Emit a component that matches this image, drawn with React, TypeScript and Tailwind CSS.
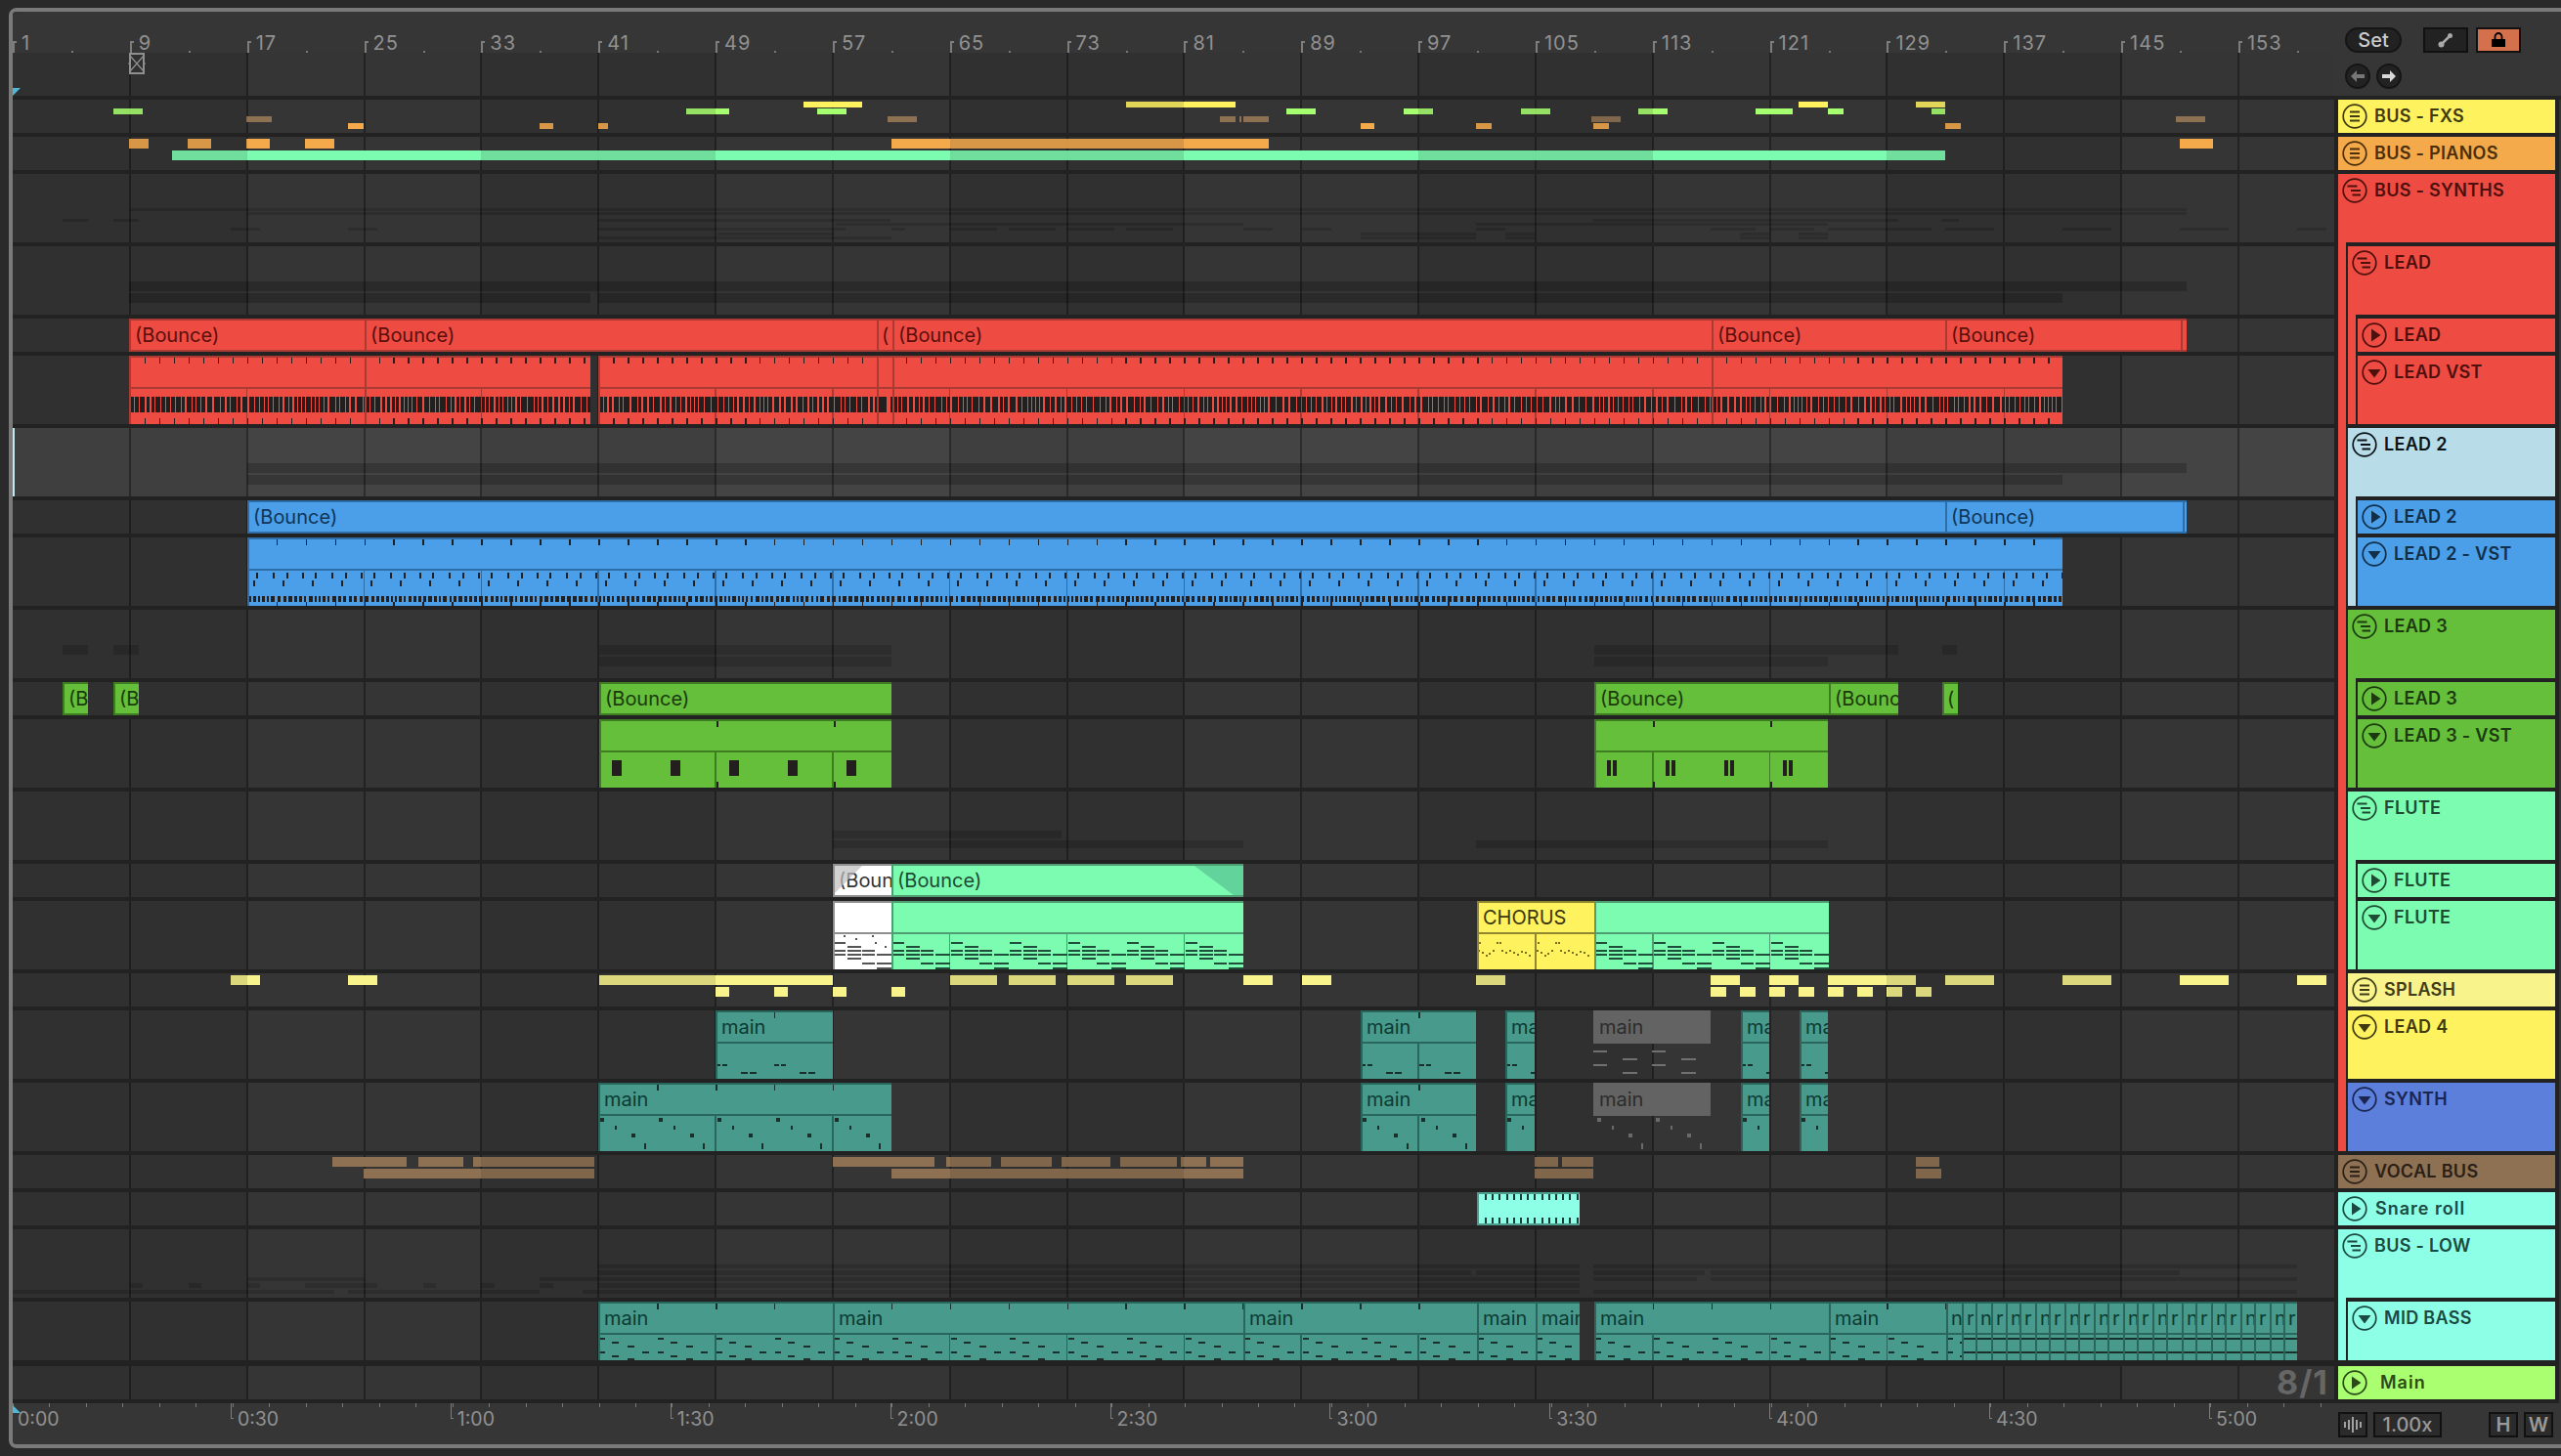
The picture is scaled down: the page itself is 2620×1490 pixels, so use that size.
import React from "react";

const X0 = 13;
const BAR = 14.98;
const GRID = Array.from({ length: 19 }, (_, i) => X0 + 8 * BAR * (i + 1));
const PERIOD = 16 * BAR;

type Rect = [number, number, number, number];
type Pal = { bg: string; bd: string; lh: string; tx: string; line: string };

const RED: Pal = { bg: "bg-[#ee4b43]", bd: "border-[#a93a34]", lh: "bg-[#a93a34]", tx: "text-[#5a0f0b]", line: "#a93a34" };
const BLUE: Pal = { bg: "bg-[#4a9fe8]", bd: "border-[#2f6da6]", lh: "bg-[#2f6da6]", tx: "text-[#103558]", line: "#2f6da6" };
const GREEN: Pal = { bg: "bg-[#65bf3a]", bd: "border-[#3f7d22]", lh: "bg-[#3f7d22]", tx: "text-[#1a3a0c]", line: "#3f7d22" };
const MINT: Pal = { bg: "bg-[#7cfcb0]", bd: "border-[#4f9d72]", lh: "bg-[#4f9d72]", tx: "text-[#1c4a33]", line: "#4f9d72" };
const WHITE: Pal = { bg: "bg-white", bd: "border-[#8f8f8f]", lh: "bg-[#8f8f8f]", tx: "text-[#333333]", line: "#8f8f8f" };
const YELLOW: Pal = { bg: "bg-[#fff25f]", bd: "border-[#8f862f]", lh: "bg-[#8f862f]", tx: "text-[#3c3610]", line: "#8f862f" };
const TEAL: Pal = { bg: "bg-[#479a8c]", bd: "border-[#2b665c]", lh: "bg-[#2b665c]", tx: "text-[#0d3a32]", line: "#2b665c" };
const GREY: Pal = { bg: "bg-[#636363]", bd: "border-[#636363]", lh: "bg-[#636363]", tx: "text-[#2c2c2c]", line: "#555555" };
const SNARE: Pal = { bg: "bg-[#8dffe6]", bd: "border-[#4f9d8c]", lh: "bg-[#4f9d8c]", tx: "text-[#1a4a42]", line: "#4f9d8c" };

function rng(seed: number) {
  let s = seed;
  return () => {
    s = (s * 1664525 + 1013904223) % 4294967296;
    return s / 4294967296;
  };
}

function barcode(x1: number, x2: number, y: number, h: number, seed: number, widths: number[], gaps: number[]): Rect[] {
  const r = rng(seed);
  const out: Rect[] = [];
  let x = x1 + 2;
  while (x < x2) {
    const w = widths[Math.floor(r() * widths.length)];
    out.push([x, y, w, h]);
    x += w + gaps[Math.floor(r() * gaps.length)];
  }
  return out;
}

function ticks(x1: number, x2: number, step: number, y: number, h: number, w = 1.5): Rect[] {
  const out: Rect[] = [];
  let k = Math.ceil((x1 - X0) / step);
  for (; X0 + k * step < x2; k++) {
    const x = X0 + k * step;
    if (x > x1 + 2) out.push([x, y, w, h]);
  }
  return out;
}

function pattern(x1: number, x2: number, start: number, period: number, items: Rect[]): Rect[] {
  const out: Rect[] = [];
  for (let x = start; x < x2; x += period) {
    if (x + 70 < x1) continue;
    for (const [dx, y, w, h] of items) out.push([x + dx, y, w, h]);
  }
  return out;
}

const FLUTE_NOTES: Rect[] = [
  [0, 42, 12, 2], [14, 46, 14, 2], [0, 50, 12, 2], [14, 50, 14, 2], [29, 50, 13, 2],
  [0, 54, 12, 2], [14, 54, 14, 2], [29, 54, 13, 2], [44, 54, 15, 2], [14, 58, 14, 2],
  [29, 63, 13, 2], [44, 63, 15, 2], [44, 68, 15, 2],
];
const LEAD4_TEAL: Rect[] = [[0, 55, 5, 2], [7, 55, 5, 2], [26, 63, 7, 2], [35, 63, 7, 2]];
const LEAD4_GREY: Rect[] = [[0, 41, 14, 2], [30, 49, 15, 2], [0, 55, 14, 2], [30, 63, 15, 2]];
const SYNTH_DOTS: Rect[] = [[2, 36, 4, 4], [17, 44, 2, 4], [34, 52, 4, 4], [47, 62, 2, 6]];
const BASS_NOTES: Rect[] = [
  [0, 37, 6, 2], [13, 41, 7, 2], [29, 45, 7, 2], [44, 51, 7, 2], [0, 51, 6, 2], [13, 55, 7, 2], [29, 58, 7, 2],
];
const CHORUS_DOTS: Rect[] = [
  [2, 42, 2, 2], [20, 42, 2, 2], [23, 42, 2, 2], [1, 50, 2, 2], [5, 52, 2, 2], [9, 55, 2, 2], [12, 53, 2, 2],
  [16, 50, 2, 2], [25, 50, 2, 2], [29, 52, 2, 2], [33, 50, 2, 2], [37, 52, 2, 2], [41, 54, 2, 2], [45, 51, 2, 2],
  [49, 52, 2, 2], [53, 55, 2, 2],
];

function Clip({ x1, x2, h, label, pal, notes, ink = "#231f1f", lines = [], extra }: {
  x1: number; x2: number; h: number; label?: string; pal: Pal; notes?: Rect[]; ink?: string; lines?: number[]; extra?: React.ReactNode;
}) {
  const w = x2 - x1;
  const narrow = w < 20;
  return (
    <div className={`absolute top-0 overflow-hidden ${pal.bg}`} style={{ left: x1 - X0, width: w, height: h }}>
      <div className={`flex h-[34px] items-center overflow-hidden border-y-2 text-[20px] leading-none whitespace-nowrap ${narrow ? "pl-[5px]" : "pl-[6px]"} ${pal.bd} ${pal.tx}`}>
        {label}
      </div>
      {extra}
      {(notes || lines.length > 0) && (
        <svg className="absolute left-0 top-0" width={w} height={h} viewBox={`${x1} 0 ${w} ${h}`} shapeRendering="crispEdges">
          {lines.map((x) => <rect key={x} x={x - 0.75} y={34} width={1.5} height={h - 34} fill={pal.line} />)}
          {notes?.map(([x, y, rw, rh], i) => <rect key={i} x={x} y={y} width={rw} height={rh} fill={ink} />)}
        </svg>
      )}
      <div className={`absolute bottom-0 left-0 top-0 w-[2px] ${pal.lh}`} />
    </div>
  );
}

function LaneNotes({ x1, x2, h, notes, fill }: { x1: number; x2: number; h: number; notes: Rect[]; fill: string }) {
  const w = x2 - x1;
  return (
    <svg className="absolute top-0" style={{ left: x1 - X0 }} width={w} height={h} viewBox={`${x1} 0 ${w} ${h}`} shapeRendering="crispEdges">
      {notes.map(([x, y, rw, rh], i) => <rect key={i} x={x} y={y} width={rw} height={rh} fill={fill} />)}
    </svg>
  );
}

function Mini({ x1, x2, y, h, c }: { x1: number; x2: number; y: number; h: number; c: string }) {
  const parts: { a: number; b: number; dim: boolean }[] = [];
  let a = x1;
  while (a < x2 - 0.01) {
    const k = Math.floor((a - X0) / PERIOD + 0.0001);
    const end = Math.min(x2, X0 + (k + 1) * PERIOD);
    parts.push({ a, b: end, dim: k % 2 === 0 });
    a = end;
  }
  return (
    <>
      {parts.map((p) => (
        <div key={p.a} className={`absolute ${p.dim ? "opacity-[.86]" : ""}`}
          style={{ left: p.a - X0, width: p.b - p.a, top: y, height: h, background: c }} />
      ))}
    </>
  );
}

const Minis = ({ list, y, h, c }: { list: [number, number][]; y: number; h: number; c: string }) => (
  <>{list.map(([a, b]) => <Mini key={a} x1={a} x2={b} y={y} h={h} c={c} />)}</>
);

const Fold = ({ list, y, h, strong }: { list: [number, number][]; y: number; h: number; strong?: boolean }) => (
  <>
    {list.map(([a, b]) => (
      <div key={a} className={`absolute ${strong ? "bg-black/20" : "bg-black/15"}`}
        style={{ left: a - X0, width: b - a, top: y, height: h }} />
    ))}
  </>
);

function Icon({ kind }: { kind: "menu" | "tree" | "play" | "down" }) {
  return (
    <svg width="26" height="26" viewBox="0 0 26 26" className="shrink-0">
      <circle cx="13" cy="13" r="11.8" fill="none" stroke="currentColor" strokeWidth="1.7" />
      {kind === "menu" && <path d="M8 8.5h10M8 13h10M8 17.5h10" stroke="currentColor" strokeWidth="2" fill="none" />}
      {kind === "tree" && <path d="M5.5 8.5h10M9 13h10M10.5 17.5h8.5" stroke="currentColor" strokeWidth="2" fill="none" />}
      {kind === "play" && <path d="M10 6.5 19.5 13 10 19.5Z" fill="currentColor" />}
      {kind === "down" && <path d="M6.5 10h13L13 18.5Z" fill="currentColor" />}
    </svg>
  );
}

interface Row {
  h: number;
  gap?: number;
  name: string;
  bg: string;
  ink: string;
  icon: "menu" | "tree" | "play" | "down";
  strips?: string[];
  gapStrips?: string[];
  hi?: boolean;
  ml?: string;
  wide?: boolean;
  lane?: React.ReactNode;
}

const R = "bg-[#ee4b43]";
const LB = "bg-[#b8dde8]";
const BL = "bg-[#4a9fe8]";
const GR = "bg-[#65bf3a]";
const MI = "bg-[#7cfcb0]";
const YL = "bg-[#fff25f]";
const SN = "bg-[#8dffe6]";

const lowerLines = (a: number, b: number) => GRID.filter((x) => x > a + 2 && x < b - 2);

const redNotes = (a: number, b: number, seed: number): Rect[] => [
  ...ticks(a, b, BAR, 2, 6),
  ...ticks(a, b, BAR, 64, 6),
  ...barcode(a, b, 42, 16, seed, [3, 3, 4, 4, 5, 6], [1, 1, 2]),
];

const blueTop: Rect[] = [
  ...ticks(253, 2110, 2 * BAR, 2, 6),
  ...pattern(253, 2110, 262, 60, [
    [0, 36, 1.5, 6], [17, 36, 1.5, 6], [31, 36, 1.5, 6], [47, 36, 1.5, 6],
    [-3, 44, 1.5, 6], [27, 44, 1.5, 6],
  ].map((r) => r as Rect)),
  ...barcode(253, 2110, 60, 6, 7, [2, 3, 3, 4], [2, 2, 3, 2]),
  ...ticks(253, 2110, 2 * BAR, 66, 4),
];

const tealTicks = (a: number, b: number): Rect[] => [...ticks(a, b, 4 * BAR, 2, 6)];

const bassClip = (a: number, b: number, label = "main") => (
  <Clip key={a} x1={a} x2={b} h={60} pal={TEAL} label={label} ink="#1b2f2b"
    notes={[...tealTicks(a, b), ...pattern(a, b, a + 1, 60, BASS_NOTES)]} lines={lowerLines(a, b)} />
);

const TINY = [2007, 2021, 2037, 2052, 2066, 2082, 2096, 2112, 2126, 2142, 2156, 2172, 2186, 2202, 2216, 2232, 2246, 2262, 2276, 2292, 2306, 2322, 2336, 2350];

const rows: Row[] = [
  {
    h: 34, name: "BUS - FXS", bg: YL, ink: "text-[#3f3a10]", icon: "menu",
    lane: (
      <>
        <Minis y={2} h={6} c="#fff25f" list={[[822, 882], [1152, 1264], [1840, 1870], [1960, 1990]]} />
        <Minis y={9} h={6} c="#a6ff6e" list={[[116, 146], [702, 746], [836, 866], [1316, 1346], [1436, 1466], [1556, 1586], [1676, 1706], [1796, 1834], [1870, 1886], [1976, 1990]]} />
        <Minis y={17} h={6} c="#8e7152" list={[[252, 278], [908, 938], [1248, 1264], [1268, 1270], [1272, 1298], [1628, 1658], [2226, 2256]]} />
        <Minis y={24} h={6} c="#f4a94a" list={[[356, 372], [552, 566], [612, 622], [1392, 1406], [1510, 1526], [1630, 1646], [1990, 2006]]} />
      </>
    ),
  },
  {
    h: 34, name: "BUS - PIANOS", bg: "bg-[#f4a94a]", ink: "text-[#4a2f08]", icon: "menu",
    lane: (
      <>
        <Minis y={2} h={10} c="#f4a94a" list={[[132, 152], [192, 216], [252, 276], [312, 342], [912, 1298], [2230, 2264]]} />
        <Mini x1={176} x2={1990} y={14} h={10} c="#7cfcb0" />
      </>
    ),
  },
  {
    h: 70, name: "BUS - SYNTHS", bg: R, ink: "text-[#4e100c]", icon: "tree", gapStrips: [R],
    lane: (
      <>
        <Fold y={35} h={3} list={[[133, 2237]]} />
        <Fold y={39} h={3} list={[[253, 2237]]} />
        <Fold y={46} h={3} list={[[64, 90], [116, 142], [612, 911], [1630, 1942], [1986, 2004]]} />
        <Fold y={50} h={3} list={[[855, 1272], [1510, 1870]]} />
        <Fold y={55} h={3} list={[[236, 266], [356, 386], [612, 865], [912, 926], [972, 1020], [1032, 1080], [1092, 1140], [1152, 1200], [1272, 1302], [1332, 1362], [1510, 1540], [1750, 1796], [1810, 1856], [1870, 1976], [1990, 2040], [2110, 2160], [2230, 2280], [2350, 2380]]} />
        <Fold y={60} h={3} list={[[734, 853], [1392, 1510], [1540, 1570], [1780, 1810], [1840, 1870]]} />
        <Fold y={64} h={3} list={[[612, 912], [1392, 1510], [1540, 1570], [1780, 1810], [1840, 1870]]} />
      </>
    ),
  },
  {
    h: 70, name: "LEAD", bg: R, ink: "text-[#4e100c]", icon: "tree", strips: [R], gapStrips: [R, R],
    lane: (
      <>
        <Fold y={36} h={10} strong list={[[132, 2237]]} />
        <Fold y={48} h={10} strong list={[[132, 604], [612, 2110]]} />
      </>
    ),
  },
  {
    h: 34, name: "LEAD", bg: R, ink: "text-[#4e100c]", icon: "play", strips: [R, R], gapStrips: [R, R],
    lane: (
      <>
        <Clip x1={132} x2={373} h={34} pal={RED} label="(Bounce)" />
        <Clip x1={373} x2={897} h={34} pal={RED} label="(Bounce)" />
        <Clip x1={897} x2={913} h={34} pal={RED} label="(" />
        <Clip x1={913} x2={1751} h={34} pal={RED} label="(Bounce)" />
        <Clip x1={1751} x2={1990} h={34} pal={RED} label="(Bounce)" />
        <Clip x1={1990} x2={2231} h={34} pal={RED} label="(Bounce)" />
        <Clip x1={2231} x2={2237} h={34} pal={RED} />
      </>
    ),
  },
  {
    h: 70, name: "LEAD VST", bg: R, ink: "text-[#4e100c]", icon: "down", strips: [R, R], gapStrips: [R],
    lane: (
      <>
        <Clip x1={132} x2={373} h={70} pal={RED} notes={redNotes(132, 373, 11)} lines={lowerLines(132, 373)} />
        <Clip x1={373} x2={604} h={70} pal={RED} notes={redNotes(373, 604, 23)} lines={lowerLines(373, 604)} />
        <Clip x1={612} x2={897} h={70} pal={RED} notes={redNotes(612, 897, 31)} lines={lowerLines(612, 897)} />
        <Clip x1={897} x2={913} h={70} pal={RED} notes={barcode(897, 913, 42, 16, 3, [8], [4])} />
        <Clip x1={913} x2={1751} h={70} pal={RED} notes={redNotes(913, 1751, 47)} lines={lowerLines(913, 1751)} />
        <Clip x1={1751} x2={2110} h={70} pal={RED} notes={redNotes(1751, 2110, 59)} lines={lowerLines(1751, 2110)} />
      </>
    ),
  },
  {
    h: 70, name: "LEAD 2", bg: LB, ink: "text-[#0c1418]", icon: "tree", strips: [R], gapStrips: [R, LB], hi: true,
    lane: (
      <>
        <div className="absolute bottom-0 left-0 top-0 w-[2px] bg-[#c2e8f0]" />
        <Fold y={36} h={10} strong list={[[253, 2237]]} />
        <Fold y={48} h={10} strong list={[[253, 2110]]} />
      </>
    ),
  },
  {
    h: 34, name: "LEAD 2", bg: BL, ink: "text-[#122f4a]", icon: "play", strips: [R, LB], gapStrips: [R, LB],
    lane: (
      <>
        <Clip x1={253} x2={1990} h={34} pal={BLUE} label="(Bounce)" />
        <Clip x1={1990} x2={2233} h={34} pal={BLUE} label="(Bounce)" />
        <Clip x1={2233} x2={2237} h={34} pal={BLUE} />
      </>
    ),
  },
  {
    h: 70, name: "LEAD 2 - VST", bg: BL, ink: "text-[#122f4a]", icon: "down", strips: [R, LB], gapStrips: [R],
    lane: <Clip x1={253} x2={2110} h={70} pal={BLUE} notes={blueTop} lines={lowerLines(253, 2110)} />,
  },
  {
    h: 70, name: "LEAD 3", bg: GR, ink: "text-[#1c3a10]", icon: "tree", strips: [R], gapStrips: [R, GR],
    lane: (
      <>
        <Fold y={36} h={10} list={[[64, 90], [116, 142], [613, 912], [1631, 1942], [1987, 2002]]} />
        <Fold y={48} h={10} list={[[613, 912], [1631, 1870]]} />
      </>
    ),
  },
  {
    h: 34, name: "LEAD 3", bg: GR, ink: "text-[#1c3a10]", icon: "play", strips: [R, GR], gapStrips: [R, GR],
    lane: (
      <>
        <Clip x1={64} x2={90} h={34} pal={GREEN} label="(B" />
        <Clip x1={116} x2={142} h={34} pal={GREEN} label="(B" />
        <Clip x1={613} x2={912} h={34} pal={GREEN} label="(Bounce)" />
        <Clip x1={1631} x2={1871} h={34} pal={GREEN} label="(Bounce)" />
        <Clip x1={1871} x2={1942} h={34} pal={GREEN} label="(Bounc" />
        <Clip x1={1987} x2={2003} h={34} pal={GREEN} label="(" />
      </>
    ),
  },
  {
    h: 70, name: "LEAD 3 - VST", bg: GR, ink: "text-[#1c3a10]", icon: "down", strips: [R, GR], gapStrips: [R],
    lane: (
      <>
        <Clip x1={613} x2={912} h={70} pal={GREEN} lines={lowerLines(613, 912)}
          notes={[[733, 2, 1.5, 6], [853, 2, 1.5, 6], [733, 64, 1.5, 6], [853, 64, 1.5, 6], ...[626, 686, 746, 806, 866].map((x) => [x, 42, 10, 16] as Rect)]} />
        <Clip x1={1631} x2={1870} h={70} pal={GREEN} lines={lowerLines(1631, 1870)}
          notes={[[1691, 2, 1.5, 6], [1811, 2, 1.5, 6], [1691, 64, 1.5, 6], [1811, 64, 1.5, 6], ...[1644, 1704, 1764, 1824].flatMap((x) => [[x, 42, 4, 16], [x + 6, 42, 4, 16]] as Rect[])]} />
      </>
    ),
  },
  {
    h: 70, name: "FLUTE", bg: MI, ink: "text-[#1f4a33]", icon: "tree", strips: [R], gapStrips: [R, MI],
    lane: (
      <>
        <Fold y={40} h={8} list={[[852, 1086]]} />
        <Fold y={50} h={8} list={[[852, 1272], [1510, 1870]]} />
      </>
    ),
  },
  {
    h: 34, name: "FLUTE", bg: MI, ink: "text-[#1f4a33]", icon: "play", strips: [R, MI], gapStrips: [R, MI],
    lane: (
      <>
        <Clip x1={852} x2={912} h={34} pal={WHITE} label="(Boun"
          extra={<svg className="absolute left-0 top-0" width="60" height="34"><polygon points="2,30 2,2 30,2" fill="#bdbdbd" opacity=".7" /></svg>} />
        <Clip x1={912} x2={1272} h={34} pal={MINT} label="(Bounce)"
          extra={<svg className="absolute left-0 top-0" width="360" height="34"><polygon points="310,2 360,2 360,32 350,32" fill="#62d39a" /></svg>} />
      </>
    ),
  },
  {
    h: 70, name: "FLUTE", bg: MI, ink: "text-[#1f4a33]", icon: "down", strips: [R, MI], gapStrips: [R],
    lane: (
      <>
        <Clip x1={852} x2={912} h={70} pal={WHITE} ink="#555555"
          notes={[...pattern(852, 912, 853, 60, FLUTE_NOTES), [863, 35, 2, 2], [875, 38, 2, 2], [892, 35, 2, 2], [895, 42, 2, 2], [905, 46, 2, 2]]} />
        <Clip x1={912} x2={1272} h={70} pal={MINT} ink="#1f4f3a" notes={pattern(912, 1272, 913, 60, FLUTE_NOTES)} lines={lowerLines(912, 1272)} />
        <Clip x1={1511} x2={1631} h={70} pal={YELLOW} label="CHORUS" ink="#7a7220" notes={pattern(1511, 1631, 1511, 60, CHORUS_DOTS)} lines={lowerLines(1511, 1631)} />
        <Clip x1={1631} x2={1871} h={70} pal={MINT} ink="#1f4f3a" notes={pattern(1631, 1871, 1632, 60, FLUTE_NOTES)} lines={lowerLines(1631, 1871)} />
      </>
    ),
  },
  {
    h: 34, name: "SPLASH", bg: "bg-[#f8f38a]", ink: "text-[#3f3d18]", icon: "menu", strips: [R], gapStrips: [R],
    lane: (
      <>
        <Minis y={2} h={10} c="#f8f38a" list={[[236, 266], [356, 386], [613, 852], [972, 1020], [1032, 1080], [1092, 1140], [1152, 1200], [1272, 1302], [1332, 1362], [1510, 1540], [1750, 1780], [1810, 1840], [1870, 1960], [1990, 2040], [2110, 2160], [2230, 2280], [2350, 2380]]} />
        <Minis y={14} h={10} c="#f8f38a" list={[[732, 746], [792, 806], [852, 866], [912, 926], [1750, 1766], [1780, 1796], [1810, 1826], [1840, 1856], [1870, 1886], [1900, 1916], [1930, 1946], [1960, 1976]]} />
      </>
    ),
  },
  {
    h: 70, name: "LEAD 4", bg: YL, ink: "text-[#3f3a10]", icon: "down", strips: [R], gapStrips: [R],
    lane: (
      <>
        {[[732, 852, "main"], [1392, 1510, "main"], [1540, 1570, "ma"], [1781, 1810, "ma"], [1841, 1870, "ma"]].map(([a, b, t]) => (
          <Clip key={a as number} x1={a as number} x2={b as number} h={70} pal={TEAL} label={t as string} ink="#1b2f2b" lines={lowerLines(a as number, b as number)}
            notes={[...tealTicks(a as number, b as number), ...pattern(a as number, b as number, a as number, 60, LEAD4_TEAL)]} />
        ))}
        <Clip x1={1630} x2={1750} h={34} pal={GREY} label="main" />
        <LaneNotes x1={1630} x2={1750} h={70} notes={pattern(1630, 1750, 1630, 60, LEAD4_GREY)} fill="#707070" />
      </>
    ),
  },
  {
    h: 70, name: "SYNTH", bg: "bg-[#5c7fdc]", ink: "text-[#1a2650]", icon: "down", strips: [R],
    lane: (
      <>
        {[[612, 912, "main"], [1392, 1510, "main"], [1540, 1570, "ma"], [1781, 1810, "ma"], [1841, 1870, "ma"]].map(([a, b, t]) => (
          <Clip key={a as number} x1={a as number} x2={b as number} h={70} pal={TEAL} label={t as string} ink="#1b2f2b" lines={lowerLines(a as number, b as number)}
            notes={[...tealTicks(a as number, b as number), ...pattern(a as number, b as number, a as number, 60, SYNTH_DOTS)]} />
        ))}
        <Clip x1={1630} x2={1750} h={34} pal={GREY} label="main" />
        <LaneNotes x1={1630} x2={1750} h={70} notes={pattern(1630, 1750, 1632, 60, SYNTH_DOTS)} fill="#6a6a6a" />
      </>
    ),
  },
  {
    h: 34, name: "VOCAL BUS", bg: "bg-[#8e7152]", ink: "text-[#2a2017]", icon: "menu",
    lane: (
      <>
        <Minis y={2} h={10} c="#8e7152" list={[[340, 416], [428, 474], [484, 608], [852, 956], [968, 1014], [1024, 1076], [1086, 1136], [1146, 1204], [1208, 1234], [1238, 1272], [1570, 1594], [1598, 1630], [1960, 1984]]} />
        <Minis y={14} h={10} c="#8e7152" list={[[372, 608], [912, 1272], [1570, 1630], [1960, 1986]]} />
      </>
    ),
  },
  {
    h: 34, name: "Snare roll", bg: SN, ink: "text-[#1a4a42]", icon: "play", ml: "ml-[8px]", wide: true,
    lane: (
      <Clip x1={1511} x2={1616} h={34} pal={SNARE} ink="#1a3a34"
        notes={Array.from({ length: 14 }, (_, i) => 1519 + i * 7.2).flatMap((x) => [[Math.round(x), 2, 1.5, 6], [Math.round(x), 26, 1.5, 6]] as Rect[])} />
    ),
  },
  {
    h: 70, name: "BUS - LOW", bg: SN, ink: "text-[#1a4a42]", icon: "tree", gapStrips: [SN],
    lane: (
      <>
        <Fold y={36} h={4} list={[[612, 1616], [1630, 2350]]} />
        <Fold y={42} h={5} list={[[612, 1505], [1510, 1616], [1630, 1744], [1750, 2230]]} />
        <Fold y={49} h={4} list={[[253, 373], [552, 1616], [1630, 1736], [1750, 2350]]} />
        <Fold y={55} h={5} list={[[133, 146], [193, 206], [253, 266], [312, 386], [433, 446], [492, 506], [552, 566], [612, 1616]]} />
        <Fold y={62} h={4} list={[[13, 342], [356, 552], [596, 1616], [1630, 2350]]} />
      </>
    ),
  },
  {
    h: 60, gap: 6, name: "MID BASS", bg: SN, ink: "text-[#1a4a42]", icon: "down", strips: [SN],
    lane: (
      <>
        {bassClip(612, 852)}
        {bassClip(852, 1272)}
        {bassClip(1272, 1511)}
        {bassClip(1511, 1571)}
        {bassClip(1571, 1616)}
        {bassClip(1631, 1871)}
        {bassClip(1871, 1991)}
        {bassClip(1991, 2007, "n")}
        {TINY.slice(0, -1).map((a, i) => (
          <Clip key={a} x1={a} x2={TINY[i + 1]} h={60} pal={TEAL} label={i % 2 === 0 ? "r" : "n"} ink="#1b2f2b"
            notes={[[a, 37, 20, 2], [a, 51, 20, 2]]} />
        ))}
      </>
    ),
  },
  {
    h: 34, name: "Main", bg: "bg-[#a9ff70]", ink: "text-[#2c4a18]", icon: "play", ml: "ml-[13px]", wide: true,
    lane: <div className="absolute right-[6px] top-[-3px] text-[34px] leading-[40px] font-bold tracking-[1px] text-[#666666]">8/1</div>,
  },
];

function Strips({ list }: { list: string[] }) {
  return (
    <>
      {list.map((c, i) => (
        <React.Fragment key={i}>
          <div className={`w-[8px] shrink-0 ${c}`} />
          <div className="w-[2px] shrink-0 bg-[#222222]" />
        </React.Fragment>
      ))}
    </>
  );
}

const laneBg = (bright: string, dim: string) => {
  const stops: string[] = [];
  for (let i = 0; i < 10; i++) {
    const a = i * PERIOD;
    const c = i % 2 === 0 ? dim : bright;
    stops.push(`${c} ${a}px ${a + PERIOD}px`);
  }
  return { backgroundImage: `linear-gradient(90deg, ${stops.join(", ")})` };
};

function GridLines() {
  return (
    <>
      {GRID.map((x) => (
        <div key={x} className="absolute bottom-0 top-0 w-[2px] bg-black/35" style={{ left: x - X0 - 1 }} />
      ))}
    </>
  );
}

function TrackRow({ row }: { row: Row }) {
  const gap = row.gap ?? 4;
  return (
    <div className="flex bg-[#222222]" style={{ height: row.h + gap }}>
      <div className="relative w-[2375px] shrink-0 overflow-hidden" style={{ height: row.h, ...(row.hi ? laneBg("#444444", "#3f3f3f") : laneBg("#353535", "#303030")) }}>
        <GridLines />
        {row.lane}
      </div>
      <div className="ml-[4px] flex w-[222px] shrink-0 flex-col">
        <div className="flex" style={{ height: row.h }}>
          <Strips list={row.strips ?? []} />
          <div className={`flex-1 ${row.bg} ${row.ink}`}>
            <div className="flex h-[34px] items-center pl-[4px]">
              <Icon kind={row.icon} />
              <span className={`${row.ml ?? "ml-[7px]"} text-[18px] font-semibold leading-none whitespace-nowrap ${row.wide ? "tracking-[1px]" : "tracking-[0.3px]"}`}>{row.name}</span>
            </div>
          </div>
        </div>
        <div className="flex" style={{ height: gap }}>
          <Strips list={row.gapStrips ?? []} />
        </div>
      </div>
      <div className="ml-[4px] flex-1 bg-[#333333]" />
    </div>
  );
}

function Header() {
  return (
    <div className="flex h-[90px] bg-[#222222]">
      <div className="flex h-[86px] w-full bg-[#363636]">
        <div className="relative w-[2375px] shrink-0">
          <div className="absolute inset-x-0 bottom-0 top-[42px]" style={laneBg("#353535", "#303030")}>
            <GridLines />
          </div>
          {Array.from({ length: 20 }, (_, i) => {
            const x = i * 8 * BAR;
            return (
              <React.Fragment key={i}>
                <div className="absolute top-[30px] h-[12px] w-[2px] bg-[#7d7d7d]" style={{ left: x }} />
                <div className="absolute top-[30px] h-[2px] w-[3px] bg-[#7d7d7d]" style={{ left: x + 1 }} />
                <span className="absolute top-[22px] text-[20px] leading-[20px] tracking-[1px] text-[#919191]" style={{ left: x + 9 }}>{1 + i * 8}</span>
                <div className="absolute top-[40px] h-[2px] w-[2px] bg-[#777777]" style={{ left: x + 60 }} />
              </React.Fragment>
            );
          })}
          <svg className="absolute left-[118px] top-[42px]" width="18" height="22" viewBox="0 0 18 22" fill="none" stroke="#8f8f8f" strokeWidth="2">
            <rect x="2" y="1" width="14" height="20" />
            <path d="M2 3 16 19M16 3 2 19M0 11h2M16 11h2" strokeWidth="1.2" />
          </svg>
          <svg className="absolute left-0 top-[78px]" width="8" height="8" viewBox="0 0 8 8"><polygon points="0,0 8,0 0,8" fill="#4fb8d6" /></svg>
        </div>
        <div className="ml-[4px] flex flex-col gap-[11px] pl-[7px] pt-[16px]">
          <div className="flex h-[26px] items-center">
            <div className="flex h-[26px] w-[58px] items-center justify-center rounded-full border-2 border-[#151515] bg-[#222222] text-[20px] font-medium text-[#cccccc]">Set</div>
            <div className="ml-[22px] flex h-[26px] w-[46px] items-center justify-center border-2 border-[#111111] bg-[#222222]">
              <svg width="16" height="16" viewBox="0 0 16 16"><path d="M3 13 13 3" stroke="#a8a8a8" strokeWidth="2.5" /><circle cx="3.5" cy="12.5" r="3" fill="#a8a8a8" /><circle cx="12.5" cy="3.5" r="2.5" fill="#a8a8a8" /></svg>
            </div>
            <div className="ml-[8px] flex h-[26px] w-[46px] items-center justify-center border-2 border-[#111111] bg-[#d4704c]">
              <svg width="16" height="16" viewBox="0 0 16 16"><path d="M4.5 7V4.5a3.5 3.5 0 0 1 7 0V7" fill="none" stroke="#000" strokeWidth="1.8" /><rect x="1" y="7" width="14" height="8" fill="#000" /></svg>
            </div>
          </div>
          <div className="flex gap-[6px]">
            <div className="flex h-[26px] w-[26px] items-center justify-center rounded-full border-2 border-[#151515] bg-[#222222]">
              <svg width="16" height="14" viewBox="0 0 16 14"><path d="M7 1 1 7l6 6V9h8V5H7Z" fill="#777777" /></svg>
            </div>
            <div className="flex h-[26px] w-[26px] items-center justify-center rounded-full border-2 border-[#151515] bg-[#222222]">
              <svg width="16" height="14" viewBox="0 0 16 14"><path d="M9 1l6 6-6 6V9H1V5h8Z" fill="#d8d8d8" /></svg>
            </div>
          </div>
        </div>
      </div>
    </div>
  );
}

function Footer() {
  const times = ["0:00", "0:30", "1:00", "1:30", "2:00", "2:30", "3:00", "3:30", "4:00", "4:30", "5:00"];
  const box = "flex h-[26px] items-center justify-center border-2 border-[#111111] bg-[#2b2b2b] leading-none text-[#9a9a9a]";
  return (
    <div className="flex h-[42px] bg-[#363636]">
      <div className="relative w-[2375px] shrink-0 overflow-hidden">
        {Array.from({ length: 64 }, (_, i) => (
          <div key={i} className="absolute top-0 h-[4px] w-[1px] bg-[#777777]" style={{ left: i * 37.47 }} />
        ))}
        {times.map((t, i) => {
          const x = i * 224.9 - 2;
          return (
            <React.Fragment key={t}>
              {i > 0 && <div className="absolute top-0 h-[16px] w-[1px] bg-[#7d7d7d]" style={{ left: x }} />}
              {i > 0 && <div className="absolute top-[15px] h-[1px] w-[3px] bg-[#7d7d7d]" style={{ left: x }} />}
              <span className="absolute top-[6px] text-[19.5px] leading-[20px] text-[#919191]" style={{ left: x + 7 }}>{t}</span>
            </React.Fragment>
          );
        })}
        <svg className="absolute left-0 top-[2px]" width="8" height="8" viewBox="0 0 8 8"><polygon points="0,0 8,8 0,8" fill="#4fb8d6" /></svg>
      </div>
      <div className="ml-[4px] flex items-start gap-[6px] pt-[9px]">
        <div className={`${box} w-[30px]`}>
          <svg width="20" height="16" viewBox="0 0 20 16" fill="#a0a0a0">
            <rect x="1" y="5" width="2" height="6" /><rect x="5" y="3" width="2" height="10" /><rect x="9" y="0" width="2" height="16" /><rect x="13" y="3" width="2" height="10" /><rect x="17" y="5" width="2" height="6" />
          </svg>
        </div>
        <div className={`${box} w-[70px] text-[20px] font-medium`}>1.00x</div>
        <div className={`${box} ml-[42px] w-[30px] text-[20px] font-semibold`}>H</div>
        <div className={`${box} w-[30px] text-[20px] font-semibold`}>W</div>
      </div>
    </div>
  );
}

export default function App() {
  return (
    <div className="h-[1490px] w-[2620px] overflow-hidden bg-[#2a2a2a] pl-[9px] pt-[8px] font-['Inter',sans-serif]">
      <div className="h-[1474px] w-[2620px] overflow-hidden rounded-l-[8px] border-4 border-[#7a7a7a]">
        <Header />
        {rows.map((r, i) => <TrackRow key={i} row={r} />)}
        <Footer />
      </div>
    </div>
  );
}
